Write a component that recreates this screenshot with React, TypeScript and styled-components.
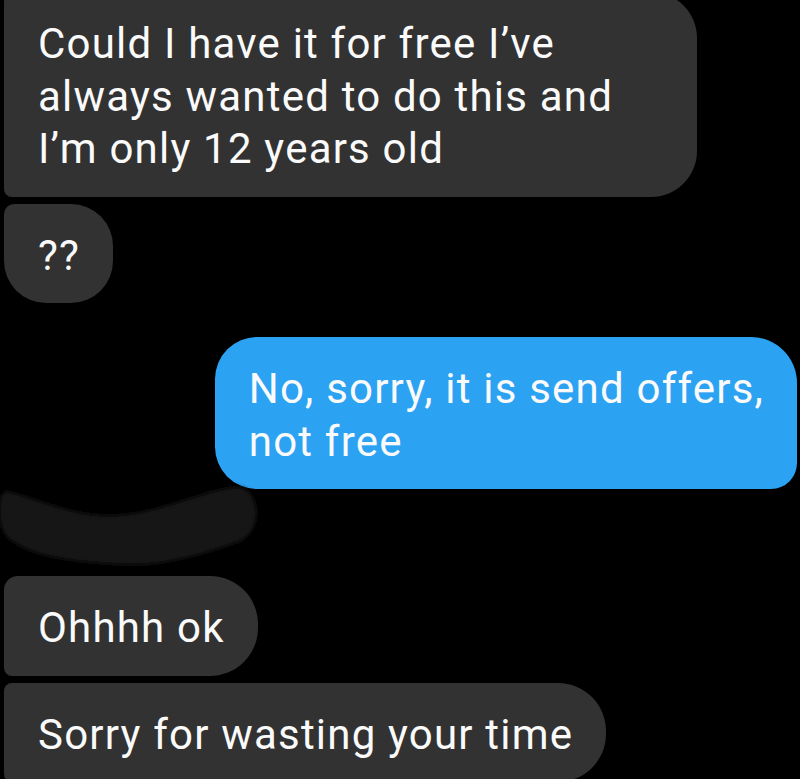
import React from "react";
import styled, { createGlobalStyle } from "styled-components";

const GlobalStyle = createGlobalStyle`
  html, body {
    margin: 0;
    padding: 0;
    background: #000;
    overflow: hidden;
  }
  #root {
    width: 800px;
    height: 779px;
    overflow: hidden;
  }
`;

const Thread = styled.div`
  display: flex;
  flex-direction: column;
  align-items: flex-start;
  padding: 0 3px 0 4px;
  margin-top: -8px;
  font-family: Roboto, "Noto Sans", sans-serif;
`;

const Group = styled.div<{ $out?: boolean; $top?: number }>`
  display: flex;
  flex-direction: column;
  align-items: ${(p) => (p.$out ? "flex-end" : "flex-start")};
  align-self: ${(p) => (p.$out ? "flex-end" : "flex-start")};
  gap: 7px;
  margin-top: ${(p) => p.$top ?? 0}px;
`;

const Bubble = styled.div<{ $out?: boolean; $radius: string; $width?: number }>`
  box-sizing: border-box;
  width: ${(p) => (p.$width ? `${p.$width}px` : "auto")};
  padding: 26px 33px 21px 34px;
  background: ${(p) => (p.$out ? "#2ca2f3" : "#323232")};
  color: #fafafa;
  font-size: 42px;
  letter-spacing: 1.2px;
  line-height: 52.5px;
  border-radius: ${(p) => p.$radius};
  white-space: nowrap;
`;

const Redaction = styled.div`
  height: 87px;
  width: 260px;
  svg {
    display: block;
    overflow: visible;
  }
`;

export default function App() {
  return (
    <>
      <GlobalStyle />
      <Thread>
        <Group>
          <Bubble $radius="10px 46px 46px 8px" $width={693}>
            Could I have it for free I’ve
            <br />
            always wanted to do this and
            <br />
            I’m only 12 years old
          </Bubble>
          <Bubble $radius="10px 42px 42px 42px">??</Bubble>
        </Group>
        <Group $out $top={34}>
          <Bubble $out $radius="42px 46px 26px 42px">
            No, sorry, it is send offers,
            <br />
            not free
          </Bubble>
        </Group>
        <Redaction>
          <svg width="260" height="87" viewBox="0 0 260 87">
            <defs>
              <filter id="soft" x="-10%" y="-20%" width="120%" height="140%">
                <feGaussianBlur stdDeviation="2" />
              </filter>
            </defs>
            <path
              d="M2 2 C30 8 70 28 110 26 C160 24 210 -4 235 -2 C255 0 262 40 235 53 C200 65 160 78 120 76 C80 74 30 70 5 50 C-8 40 -8 5 2 2 Z"
              fill="#121212"
              filter="url(#soft)"
            />
          </svg>
        </Redaction>
        <Group $top={0}>
          <Bubble $radius="14px 48px 48px 8px">Ohhhh ok</Bubble>
          <Bubble $radius="8px 48px 48px 8px">Sorry for wasting your time</Bubble>
        </Group>
      </Thread>
    </>
  );
}
